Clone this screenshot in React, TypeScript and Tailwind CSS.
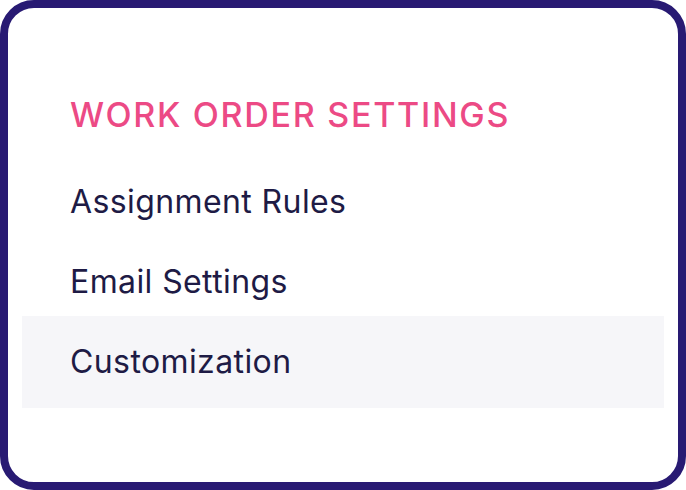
import React from 'react'

const items = [
  { label: 'Assignment Rules', active: false },
  { label: 'Email Settings', active: false },
  { label: 'Customization', active: true },
]

export default function App() {
  return (
    <div className="w-[686px] h-[490px] bg-white">
      <div
        className="w-full h-full rounded-[34px] border-8 border-[#281a73] bg-white pt-[66px] px-[14px]"
        style={{ fontFamily: 'Inter, "Noto Sans", sans-serif' }}
      >
        <h2 className="pl-[48px] h-[80px] flex items-center text-[34px] font-medium tracking-[1.7px] text-[#ec4a85]">
          WORK ORDER SETTINGS
        </h2>
        <ul className="mt-[8px]">
          {items.map((item) => (
            <li
              key={item.label}
              className={
                item.active
                  ? '-mt-[6px] h-[92px] flex items-center pl-[48px] bg-[#f6f6f9] text-[32px] tracking-[0.4px] text-[#1e1b45]'
                  : 'h-[80px] flex items-center pl-[48px] text-[32px] tracking-[0.4px] text-[#1e1b45]'
              }
            >
              {item.label}
            </li>
          ))}
        </ul>
      </div>
    </div>
  )
}
